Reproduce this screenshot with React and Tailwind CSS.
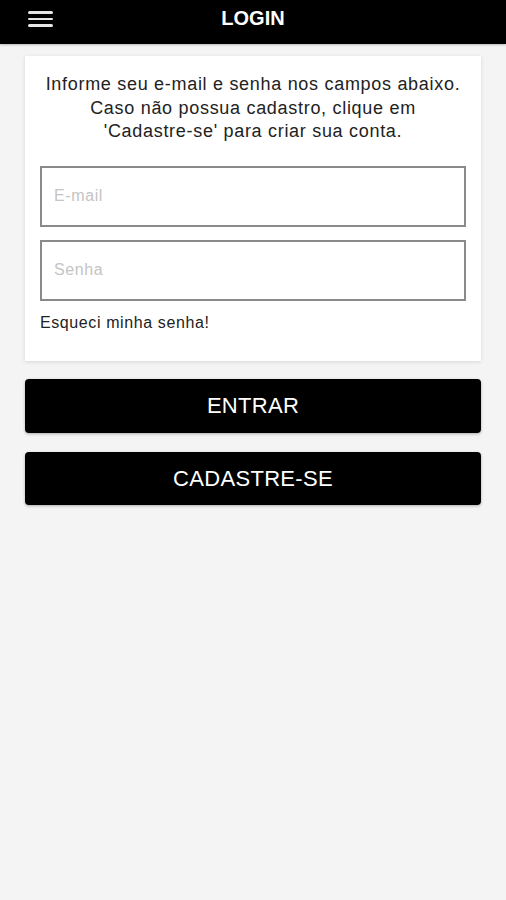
export default function App() {
  const font = { fontFamily: '"Liberation Sans", Arial, sans-serif' };
  return (
    <div className="min-h-[900px] w-full bg-[#f4f4f4] text-[#1c1c1c]" style={font}>
      <header className="relative flex h-[44px] items-center justify-center bg-black shadow-[0_1px_2px_rgba(0,0,0,0.25)]">
        <div className="absolute left-[28px] top-[11px] flex w-[25px] flex-col gap-[4px]">
          <span className="block h-[2.5px] w-full rounded-full bg-[#e6e6e6]" />
          <span className="block h-[2.5px] w-full rounded-full bg-[#e6e6e6]" />
          <span className="block h-[2.5px] w-full rounded-full bg-[#e6e6e6]" />
        </div>
        <h1 className="text-[20px] font-bold text-white leading-none mt-[-8px]">LOGIN</h1>
      </header>

      <main className="flex flex-col px-[25px] pt-[12px]">
        <section className="flex flex-col bg-white px-[15px] pt-[17px] pb-[28px] shadow-[0_1px_4px_rgba(0,0,0,0.12)]">
          <p className="text-center text-[18px] leading-[23.5px] tracking-[0.7px] text-[#222]">
            Informe seu e-mail e senha nos campos abaixo.
            <br />
            Caso não possua cadastro, clique em
            <br />
            'Cadastre-se' para criar sua conta.
          </p>
          <input
            type="email"
            placeholder="E-mail"
            className="mt-[22px] h-[61px] w-full border-2 border-[#8a8a8a] bg-white px-[12px] text-[16px] tracking-[0.6px] outline-none placeholder:text-[#c4c4c4]"
            style={font}
          />
          <input
            type="password"
            placeholder="Senha"
            className="mt-[13px] h-[61px] w-full border-2 border-[#8a8a8a] bg-white px-[12px] text-[16px] tracking-[0.6px] outline-none placeholder:text-[#c4c4c4]"
            style={font}
          />
          <a className="mt-[12px] text-[16px] leading-[20px] tracking-[0.6px] text-[#222]">Esqueci minha senha!</a>
        </section>

        <button
          className="mt-[18px] flex h-[54px] w-full items-center justify-center rounded-[4px] bg-black text-[22px] tracking-[0.3px] text-white shadow-[0_1px_3px_rgba(0,0,0,0.3)]"
          style={font}
        >
          ENTRAR
        </button>
        <button
          className="mt-[19px] flex h-[53px] w-full items-center justify-center rounded-[4px] bg-black text-[22px] tracking-[0.3px] text-white shadow-[0_1px_3px_rgba(0,0,0,0.3)]"
          style={font}
        >
          CADASTRE-SE
        </button>
      </main>
    </div>
  );
}
